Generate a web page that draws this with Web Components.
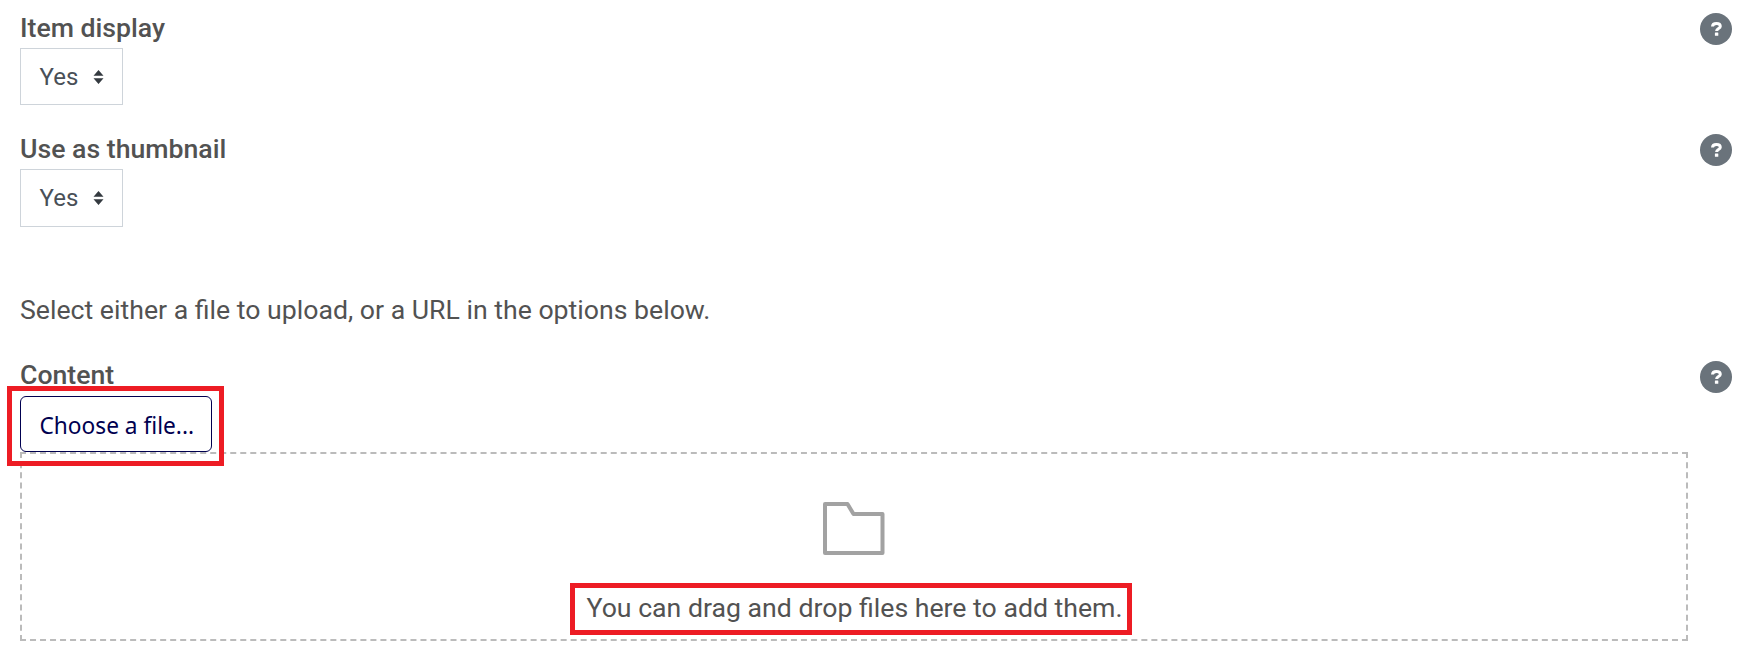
<!DOCTYPE html>
<html>
<head>
<meta charset="utf-8">
<title>Content form</title>
<style>
  html, body { margin: 0; background: #fff; }
  body { font-family: Roboto, "Liberation Sans", sans-serif; font-size: 26.67px; color: #525252; }
</style>
</head>
<body>
<form-page>
  <form-row label="Item display" style="--row-height:121px"><yes-select style="height:57px"></yes-select></form-row>
  <form-row label="Use as thumbnail" style="--row-height:121px"><yes-select></yes-select></form-row>
  <form-note>Select either a file to upload, or a URL in the options below.</form-note>
  <form-row label="Content" style="--row-height:auto;--label-height:39px;--help-top:4px"><file-picker></file-picker></form-row>
</form-page>

<script>
class FormPage extends HTMLElement {
  connectedCallback() {
    this.attachShadow({ mode: 'open' });
    this.shadowRoot.innerHTML = `
      <style>
        :host { display: block; padding: 10px 12px 0 20px; }
      </style>
      <slot></slot>
    `;
  }
}
customElements.define('form-page', FormPage);

class FormRow extends HTMLElement {
  connectedCallback() {
    this.attachShadow({ mode: 'open' });
    this.shadowRoot.innerHTML = `
      <style>
        :host { display: grid; grid-template-columns: 1fr 32px; align-content: start; height: var(--row-height); }
        .label { font-weight: 500; font-size: 26.67px; line-height: 36px; height: var(--label-height, 38px); color: #525252; }
        .help { width: 32px; height: 32px; border-radius: 50%; background: #6a737b;
                display: flex; align-items: center; justify-content: center; margin-top: var(--help-top, 3px); }
        .help svg { width: 11px; height: 14px; display: block; }
        .field { grid-column: 1 / 2; margin-right: 12px; }
      </style>
      <div class="label">${this.getAttribute('label')}</div>
      <div class="help">
        <svg viewBox="0 0 11 14"><path fill="none" stroke="#fff" stroke-width="3" d="M1.500 4.500C1.600 2.600 3.200 1.500 5.400 1.500c2.300 0 3.900 1 3.900 2.800 0 2.400-3.700 2.100-3.700 4.700"/><rect x="3.900" y="10.500" width="3.400" height="3.200" rx=".5" fill="#fff"/></svg>
      </div>
      <div class="field"><slot></slot></div>
    `;
  }
}
customElements.define('form-row', FormRow);

class YesSelect extends HTMLElement {
  connectedCallback() {
    this.attachShadow({ mode: 'open' });
    this.shadowRoot.innerHTML = `
      <style>
        :host { display: flex; align-items: center; box-sizing: border-box; width: 103px; height: 58px;
                border: 1.500px solid #ced4da; padding-left: 18.500px; font-size: 24px; color: #495057; }
        svg { width: 11px; height: 14px; margin-left: 15px; }
      </style>
      <span>Yes</span>
      <svg viewBox="0 0 11 14"><path fill="#343a40" d="M5.500 0 10.500 5.700H.5zM5.500 14 .5 8.300h10z"/></svg>
    `;
  }
}
customElements.define('yes-select', YesSelect);

class FormNote extends HTMLElement {
  connectedCallback() {
    this.attachShadow({ mode: 'open' });
    this.shadowRoot.innerHTML = `
      <style>
        :host { display: block; padding-top: 40px; line-height: 36px; height: 65px; color: #525252; }
      </style>
      <slot></slot>
    `;
  }
}
customElements.define('form-note', FormNote);

class FilePicker extends HTMLElement {
  connectedCallback() {
    this.attachShadow({ mode: 'open' });
    this.shadowRoot.innerHTML = `
      <style>
        :host { display: block; position: relative; }
        button { display: block; box-sizing: border-box; width: 192px; height: 56px; padding: 2px 0 0 18.500px; text-align: left; background: #fff;
                 border: 1.500px solid #000050; border-radius: 6px; font: 22.7px "Noto Sans", "Open Sans", sans-serif; color: #000050; }
        .mark { position: absolute; left: -13px; top: -10px; width: 217px; height: 80px; box-sizing: border-box;
                border: 5px solid #ed1c24; pointer-events: none; }
        .drop { box-sizing: border-box; height: 189px; border: 2px dashed #bbb; display: flex; flex-direction: column; align-items: center; }
        .drop svg { width: 62px; height: 54px; margin-top: 48px; display: block; }
        .text { box-sizing: border-box; border: 5px solid #ed1c24; height: 52px; line-height: 41px; margin: 27px 6px 0 0;
                padding: 0 4px 0 11px; color: #525252; white-space: nowrap; }
      </style>
      <button type="button">Choose a file...</button>
      <div class="mark"></div>
      <div class="drop">
        <svg viewBox="0 0 62 54"><path fill="none" stroke="#a2a2a2" stroke-width="4" stroke-linejoin="round" d="M2 2h22.500l6 10H59.500V51H2z"/></svg>
        <div class="text">You can drag and drop files here to add them.</div>
      </div>
    `;
  }
}
customElements.define('file-picker', FilePicker);
</script>
</body>
</html>
